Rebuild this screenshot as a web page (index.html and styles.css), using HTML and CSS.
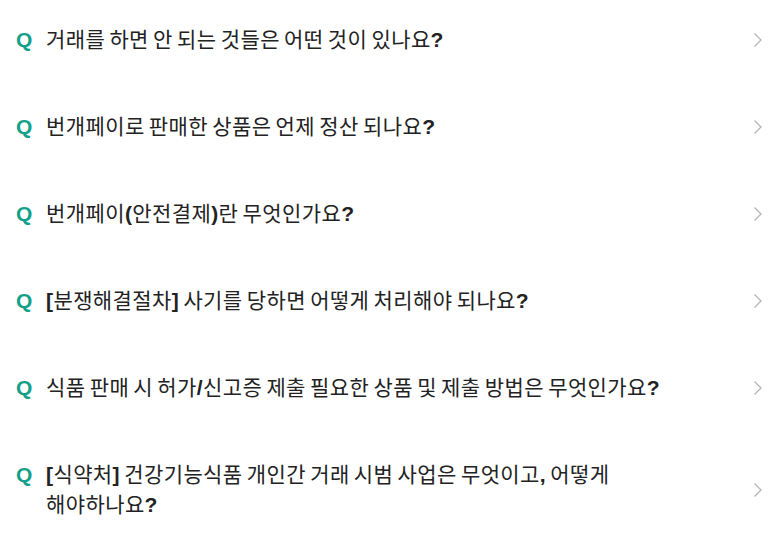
FILE: index.html
```html
<!DOCTYPE html>
<html lang="ko">
<head>
	<meta charset="UTF-8">
	<title>자주 묻는 질문</title>
	<link rel="stylesheet" href="styles.css">
</head>
<body>
	<ul class="faq">
		<li class="faq-item">
			<span class="faq-q">Q</span>
			<p class="faq-title">거래를 하면 안 되는 것들은 어떤 것이 있나요<b>?</b></p>
			<svg class="faq-arrow" viewBox="0 0 10 16"><path d="M1.5 1.5 L8 8 L1.5 14.5"/></svg>
		</li>
		<li class="faq-item">
			<span class="faq-q">Q</span>
			<p class="faq-title">번개페이로 판매한 상품은 언제 정산 되나요<b>?</b></p>
			<svg class="faq-arrow" viewBox="0 0 10 16"><path d="M1.5 1.5 L8 8 L1.5 14.5"/></svg>
		</li>
		<li class="faq-item">
			<span class="faq-q">Q</span>
			<p class="faq-title">번개페이<b>(</b>안전결제<b>)</b>란 무엇인가요<b>?</b></p>
			<svg class="faq-arrow" viewBox="0 0 10 16"><path d="M1.5 1.5 L8 8 L1.5 14.5"/></svg>
		</li>
		<li class="faq-item">
			<span class="faq-q">Q</span>
			<p class="faq-title"><b>[</b>분쟁해결절차<b>]</b> 사기를 당하면 어떻게 처리해야 되나요<b>?</b></p>
			<svg class="faq-arrow" viewBox="0 0 10 16"><path d="M1.5 1.5 L8 8 L1.5 14.5"/></svg>
		</li>
		<li class="faq-item">
			<span class="faq-q">Q</span>
			<p class="faq-title">식품 판매 시 허가<b>/</b>신고증 제출 필요한 상품 및 제출 방법은 무엇인가요<b>?</b></p>
			<svg class="faq-arrow" viewBox="0 0 10 16"><path d="M1.5 1.5 L8 8 L1.5 14.5"/></svg>
		</li>
		<li class="faq-item">
			<span class="faq-q">Q</span>
			<p class="faq-title"><b>[</b>식약처<b>]</b> 건강기능식품 개인간 거래 시범 사업은 무엇이고<b>,</b> 어떻게<br>해야하나요<b>?</b></p>
			<svg class="faq-arrow" viewBox="0 0 10 16"><path d="M1.5 1.5 L8 8 L1.5 14.5"/></svg>
		</li>
	</ul>
</body>
</html>
```

FILE: styles.css
```css
*{
	margin:0;
	padding:0;
	list-style:none;
	box-sizing:border-box;
}
body{
	background:#fff;
	font-family:"Liberation Sans","Noto Sans CJK KR",sans-serif;
	color:#222;
}
.faq-item{
	display:flex;
	align-items:center;
	padding:25px 16px 32px 16px;
}
.faq-q{
	width:30px;
	flex:none;
	align-self:flex-start;
	font-size:21px;
	font-weight:700;
	line-height:30px;
	color:#11a08a;
}
.faq-title{
	flex:1;
	max-width:640px;
	font-size:21px;
	line-height:30px;
	letter-spacing:0.4px;
	word-spacing:-2px;
	word-break:keep-all;
}
.faq-title b{
	font-weight:700;
}
.faq-arrow{
	width:10px;
	height:16px;
	margin-left:auto;
	flex:none;
	fill:none;
	stroke:#b5b5b5;
	stroke-width:1.3;
}
```
